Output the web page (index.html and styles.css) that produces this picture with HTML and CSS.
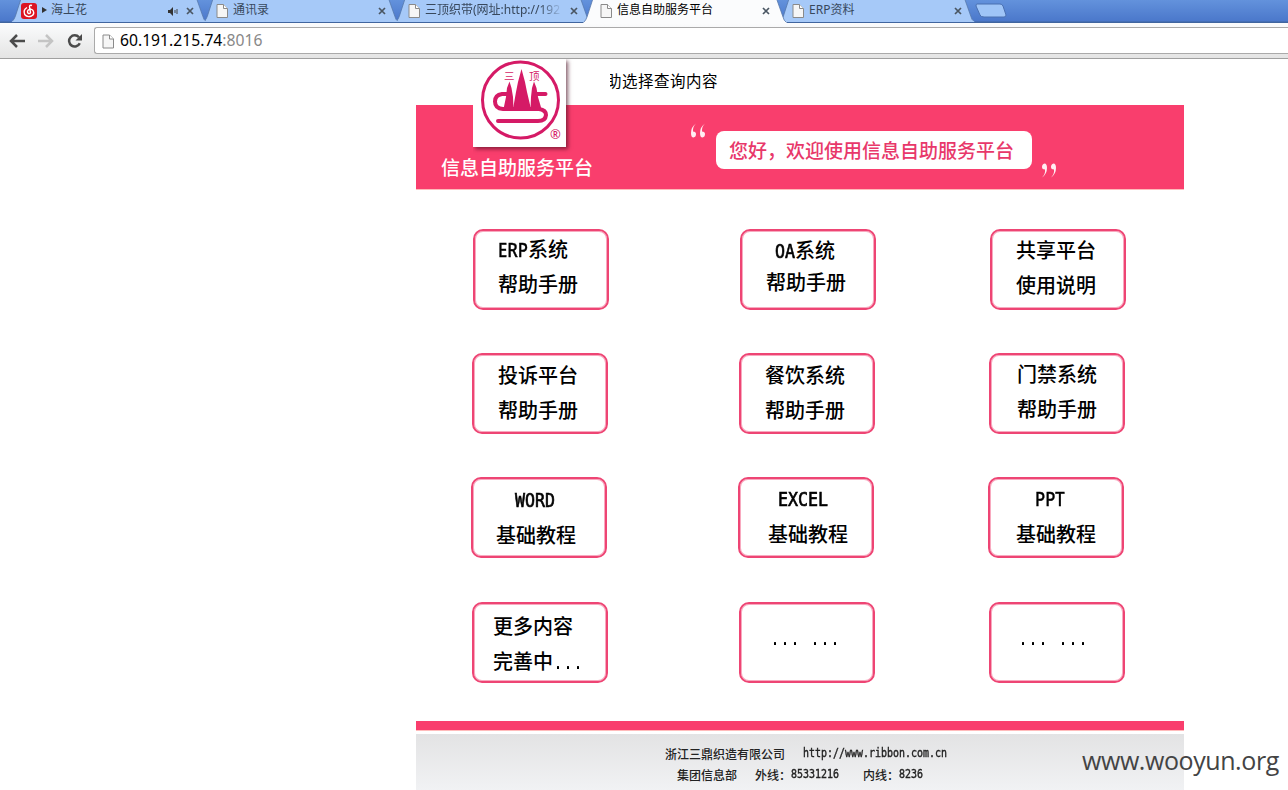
FILE: index.html
```html
<!DOCTYPE html>
<html lang="zh-CN">
<head>
<meta charset="utf-8">
<title>信息自助服务平台</title>
<link rel="stylesheet" href="styles.css">
</head>
<body>
<svg class="defs" width="0" height="0">
  <symbol id="doc" viewBox="0 0 12 14"><path d="M1 .5h6.500l4 4v9H1z" fill="#f6f6f6" stroke="#8a8a8a"/><path d="M7.500.5v4h4" fill="#fff" stroke="#8a8a8a"/></symbol>
  <symbol id="close" viewBox="0 0 8 8"><path d="M1 1l6 6M7 1L1 7" stroke="#4a5663" stroke-width="1.700"/></symbol>
  <symbol id="shape" viewBox="0 0 208 23"><path d="M0 23L1 22Q3 20 4 17L9.500 0H194L200 17Q201 21 203 22L204 23z"/><path d="M1 22Q3 20 4 17L9.500 0M194 0L200 17Q201 21 203 22" fill="none" stroke="#5577aa" stroke-width=".8"/></symbol>
</svg>
<header class="browser">
  <nav class="tabs">
    <div class="tab t1"><svg class="shape"><use href="#shape"/></svg>
      <svg class="music" viewBox="0 0 16 16"><rect width="16" height="16" rx="3" fill="#dc1523"/><path d="M11 2.500Q8.500 1.500 8.500 4L9.500 9.500Q9 11 7.500 10.500Q5.500 9 7.300 7Q10 5 12 7.500Q14 11 10.500 13Q6 14.800 3.700 11.500Q1.800 7 6 4.500" fill="none" stroke="#fff" stroke-width="1.400"/></svg>
      <svg class="play" viewBox="0 0 5 6"><path d="M0 0l5 3-5 3z"/></svg>
      <span class="label song">海上花</span>
      <svg class="sound" viewBox="0 0 10 9"><path d="M0 3h2l3-3v9L2 6H0z" fill="#333"/><path d="M7 3v3M9 2v5" stroke="#444"/></svg>
      <svg class="close"><use href="#close"/></svg></div>
    <div class="tab t2"><svg class="shape"><use href="#shape"/></svg><svg class="doc"><use href="#doc"/></svg><span class="label">通讯录</span><svg class="close"><use href="#close"/></svg></div>
    <div class="tab t3"><svg class="shape"><use href="#shape"/></svg><svg class="doc"><use href="#doc"/></svg><span class="label fade">三顶织带(网址:http://192</span><svg class="close"><use href="#close"/></svg></div>
    <div class="tab active"><svg class="shape"><use href="#shape"/></svg><svg class="doc"><use href="#doc"/></svg><span class="label">信息自助服务平台</span><svg class="close"><use href="#close"/></svg></div>
    <div class="tab"><svg class="shape"><use href="#shape"/></svg><svg class="doc"><use href="#doc"/></svg><span class="label">ERP资料</span><svg class="close"><use href="#close"/></svg></div>
    <svg class="newtab" viewBox="0 0 32 15"><path d="M2 1H25Q27 1 28 3L31 12Q31 14 29 14H9Q6 14 5 12L1 3Q1 1 2 1z" fill="#9fc5f7" stroke="#4a70b0"/></svg>
  </nav>
  <div class="toolbar">
    <svg class="nav" viewBox="0 0 16 14"><path d="M8 1L2 7l6 6M2 7h14" fill="none" stroke="#4b4b4b" stroke-width="2.500"/></svg>
    <svg class="nav" viewBox="0 0 16 14"><path d="M8 1l6 6-6 6M0 7h14" fill="none" stroke="#c4c4c4" stroke-width="2.500"/></svg>
    <svg class="nav" viewBox="0 0 16 14"><path d="M12.800 9.300A5.600 5.600 0 1 1 12 3.300" fill="none" stroke="#4b4b4b" stroke-width="2.500"/><path d="M15 0v6.500H8.500z" fill="#4b4b4b"/></svg>
    <div class="address"><svg class="page"><use href="#doc"/></svg><span class="url">60.191.215.74<i>:8016</i></span></div>
  </div>
</header>
<main class="site">
  <div class="top"><p class="marquee"><span>助选择查询内容</span></p></div>
  <section class="banner">
    <div class="logo">
      <svg viewBox="0 0 93 88">
        <circle cx="47.500" cy="41" r="38" fill="none" stroke="#d51a66" stroke-width="3"/>
        <path d="M40 50L43 33 45 23 48.500 10 52 23 54 33 58 50z" fill="#d51a66"/>
        <path d="M30.500 50L33 38 34 29 36.500 22.500 38.500 29 40 38 40.500 50zM57.500 50L58 38 59 29 61 22.500 63.500 29 65 38 68.500 50z" fill="#d51a66"/>
        <path d="M72.500 35H62M36 35H29Q22 36 22 42.500Q22 49.500 30 50H66Q73 51 73 56Q72.500 62 65 62H25" fill="none" stroke="#d51a66" stroke-width="4" stroke-linecap="round"/>
        <text x="31" y="21" class="mark">三</text><text x="56" y="21" class="mark">顶</text>
        <text x="77" y="80" class="reg">®</text>
      </svg>
    </div>
    <h1 class="brand">信息自助服务平台</h1>
    <svg class="quote open" viewBox="0 0 16 15"><path d="M6 .5Q1 4 1 10Q1 14.500 3.500 14.500Q6 14 6 11Q6 8.500 3 8.500Q2.500 4 6 .5zM15 .5Q10 4 10 10Q10 14.500 12.500 14.500Q15 14 15 11Q15 8.500 12 8.500Q11.500 4 15 .5z"/></svg>
    <p class="welcome">您好，欢迎使用信息自助服务平台</p>
    <svg class="quote shut" viewBox="0 0 16 15"><path d="M6 .5Q1 4 1 10Q1 14.500 3.500 14.500Q6 14 6 11Q6 8.500 3 8.500Q2.500 4 6 .5zM15 .5Q10 4 10 10Q10 14.500 12.500 14.500Q15 14 15 11Q15 8.500 12 8.500Q11.500 4 15 .5z" transform="rotate(180 8 7.500)"/></svg>
  </section>
  <section class="cards">
    <div class="row r1">
      <a class="card c11"><b><span class="latin pro">ERP</span>系统</b><b>帮助手册</b></a>
      <a class="card c12"><b><span class="latin two">OA</span>系统</b><b>帮助手册</b></a>
      <a class="card c13"><b>共享平台</b><b>使用说明</b></a>
    </div>
    <div class="row r2">
      <a class="card c21"><b>投诉平台</b><b>帮助手册</b></a>
      <a class="card c22"><b>餐饮系统</b><b>帮助手册</b></a>
      <a class="card c23"><b>门禁系统</b><b>帮助手册</b></a>
    </div>
    <div class="row r3">
      <a class="card c31"><b><span class="latin">WORD</span></b><b>基础教程</b></a>
      <a class="card c32"><b><span class="latin">EXCEL</span></b><b>基础教程</b></a>
      <a class="card c33"><b><span class="latin pro">PPT</span></b><b>基础教程</b></a>
    </div>
    <div class="row r4">
      <a class="card c41"><b>更多内容</b><b>完善中<span class="latin thin">...</span></b></a>
      <a class="card c42 dots"><b><span class="latin thin">... ...</span></b></a>
      <a class="card c43 dots"><b><span class="latin thin">... ...</span></b></a>
    </div>
  </section>
  <footer class="footer">
    <p class="line one"><span class="org">浙江三鼎织造有限公司</span><span class="mono">http://www.ribbon.com.cn</span></p>
    <p class="line contact"><span class="dept">集团信息部</span><span>外线：</span><span class="mono ext">85331216</span><span>内线：</span><span class="mono">8236</span></p>
  </footer>
</main>
<div class="watermark">www.wooyun.org</div>
</body>
</html>
```
FILE: styles.css
```css
* { box-sizing: border-box; }
body { margin: 0; width: 1288px; height: 790px; overflow: hidden; background: #fff; color: #000; font-family: "Noto Sans", "Noto Sans CJK SC", sans-serif; position: relative; }
p, h1 { margin: 0; font-weight: 400; }
svg { display: block; flex: none; }
.defs { position: absolute; }

/* browser chrome */
.browser { height: 59px; }
.tabs { display: flex; height: 23px; padding-left: 16px; background: linear-gradient(#6392dc, #4b78cb 21px, #40659f 22px); }
.tab { position: relative; z-index: 0; display: flex; align-items: flex-start; width: 192px; height: 23px; padding-left: 8px; }
.t1 { z-index: 3; padding-left: 5px; }
.t2 { z-index: 2; }
.t3 { z-index: 1; }
.active { z-index: 4; }
.shape { position: absolute; left: -9px; top: 0; width: 208px; height: 23px; fill: #a6c9f8; z-index: -1; }
.tab:not(.active) .shape { height: 22px; }
.active .shape { fill: #fbfcfd; }
.doc { width: 12px; height: 14px; margin: 4px 5px 0 0; }
.label { flex: none; width: 137px; height: 20px; overflow: hidden; white-space: nowrap; font: 12px/20px "Noto Sans", "Noto Sans CJK SC", sans-serif; color: #38485c; }
.active .label { color: #000; }
.fade { -webkit-mask-image: linear-gradient(90deg, #000 115px, transparent 138px); mask-image: linear-gradient(90deg, #000 115px, transparent 138px); }
.tab .close { width: 8px; height: 8px; margin: 7px 0 0 8px; }
.music { width: 16px; height: 16px; margin-top: 3px; }
.play { width: 5px; height: 6px; margin: 7px 4px 0 5px; fill: #333; }
.song { width: 117px; }
.sound { width: 10px; height: 9px; margin-top: 7px; }
.newtab { width: 32px; height: 15px; margin-top: 3px; margin-left: -1px; }
.toolbar { display: flex; height: 36px; padding: 4px 0 0 9px; border-bottom: 1px solid #a0a0a0; background: linear-gradient(#fbfcfd, #e4e4e4); }
.nav { width: 16px; height: 14px; margin: 7px 13px 0 0; }
.address { display: flex; flex: 1; height: 27px; margin-left: -2px; border: 1px solid #aaa; border-right: 0; border-radius: 3px 0 0 3px; background: #fff; }
.page { width: 12px; height: 15px; margin: 6px 6px 0 7px; }
.url { font: 15.700px/25px "Noto Sans", sans-serif; white-space: nowrap; }
.url i { font-style: normal; color: #888; }

/* site */
.site { width: 768px; margin-left: 416px; }
.top { height: 46px; padding: 11px 0 0 194px; }
.marquee { width: 110px; height: 22px; overflow: hidden; font: 15.500px/20px "Noto Sans CJK SC", sans-serif; white-space: nowrap; }
.marquee span { display: block; margin-left: -4px; letter-spacing: .5px; }
.banner { position: relative; display: flex; height: 85px; background: #f93e6d; border-bottom: 1px solid #fbb; }
.logo { position: absolute; left: 57px; top: -46px; width: 93px; height: 88px; background: #fff; box-shadow: 2px 2px 4px rgba(70,10,30,.65); clip-path: inset(0 -8px -8px 0); }
.logo svg { width: 93px; height: 88px; }
.mark { font: 10.500px "Noto Sans CJK SC", sans-serif; fill: #d51a66; }
.reg { font: 13px "Noto Sans", sans-serif; fill: #d51a66; }
.brand { width: 249px; padding: 48px 0 0 25px; font: 500 19px/27px "Noto Sans CJK SC", sans-serif; color: #fff; white-space: nowrap; }
.quote { width: 16px; height: 15px; fill: #ffeef2; }
.open { margin: 18px 10px 0 25px; }
.welcome { width: 316px; height: 38px; margin-top: 26px; padding-left: 13px; border-radius: 8px; background: #fff; color: #e8386a; font: 500 19px/37px "Noto Sans CJK SC", sans-serif; white-space: nowrap; }
.shut { margin: 58px 0 0 9px; }
.cards { height: 531px; padding-top: 39px; }
.row { display: flex; height: 124px; padding-left: 56px; }
.r1 { padding-left: 57px; }
.r3 { height: 125px; padding-left: 55px; }
.card { width: 136px; height: 81px; padding-top: 1px; border: 2px solid #ee4574; border-radius: 10px; box-shadow: inset 0 0 0 1px #f8a9bf; }
.card:nth-child(2) { margin-left: 131px; }
.card:nth-child(3) { margin-left: 114px; }
.card b { display: block; height: 35px; font: 500 20px/35px "Noto Sans CJK SC", sans-serif; white-space: nowrap; }
.latin { display: inline-block; font-family: "DejaVu Sans Mono", monospace; transform: scaleX(.83); transform-origin: 0 50%; white-space: pre; line-height: 30px; -webkit-text-stroke: .7px #000; }
.thin { -webkit-text-stroke: 0; }
.two { width: 20px; }
.pro { width: 30px; font-family: "Noto Sans", sans-serif; -webkit-text-stroke: .4px #000; }
.c11 { padding-left: 23px; padding-top: 0; }
.c12 { padding-left: 24px; }
.c12 b:first-child { padding-left: 9px; }
.c12 b:last-child { margin-top: -3px; }
.c13 { padding-left: 24px; }
.c21 { padding: 2px 0 0 24px; }
.c22 { padding: 2px 0 0 24px; }
.c23 { padding-left: 26px; }
.c31 { padding: 2px 0 0 23px; }
.c31 b:first-child, .c33 b:first-child { padding-left: 19px; }
.c32 { padding-left: 28px; }
.c32 b:first-child { padding-left: 10px; }
.c33 { padding-left: 26px; }
.c31 b:last-child, .c32 b:last-child, .c33 b:last-child { padding-top: 1px; }
.c41 { padding: 4px 0 0 19px; }
.c42 { padding-left: 29px; }
.c43 { padding-left: 27px; }
.dots { padding-top: 15px; }
.footer { height: 70px; padding-top: 22px; background: linear-gradient(#f93e6d 9px, #fbb 9px 10px, #fff 10px 13px, #e3e3e4 13px, #f1f2f4); color: #222; }
.line { display: flex; height: 21px; font: 500 12px/21px "Noto Sans CJK SC", sans-serif; white-space: nowrap; }
.one { padding-left: 249px; }
.org { width: 138px; }
.contact { padding-left: 261px; }
.dept { width: 78px; }
.mono { width: 48px; font-family: "DejaVu Sans Mono", monospace; font-size: 12px; transform: scaleX(.83); transform-origin: 0 50%; -webkit-text-stroke: .4px #222; }
.ext { width: 72px; }
.watermark { position: absolute; left: 1082px; top: 742px; font: 25px/36px "Open Sans", sans-serif; letter-spacing: -.42px; color: #444; white-space: nowrap; }
```
